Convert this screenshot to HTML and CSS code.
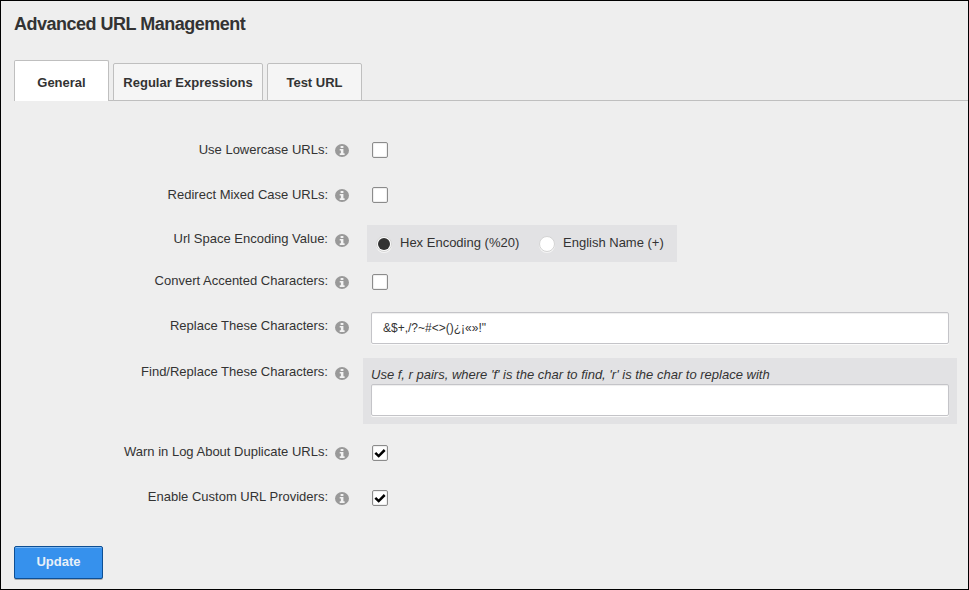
FILE: index.html
```html
<!DOCTYPE html>
<html lang="en">
<head>
<meta charset="utf-8">
<title>Advanced URL Management</title>
<link rel="stylesheet" href="styles.css">
</head>
<body>
<svg class="defs" width="0" height="0" aria-hidden="true">
  <symbol id="info" viewBox="0 0 14 13" preserveAspectRatio="none">
    <ellipse cx="7" cy="6.5" rx="7" ry="6.5" fill="#999"/>
    <path d="M5.6 1.9h2.8v2H5.6zM4.7 4.9h3.7v4.4h1.2v1.7H4.7V9.3h1.2V6.5H4.7z" fill="#f2f2f2"/>
  </symbol>
  <symbol id="check" viewBox="0 0 12 12">
    <path d="M1.3 5.8L4.7 9.1L10.7 3" fill="none" stroke="#000" stroke-width="2.5"/>
  </symbol>
</svg>
<main class="page">
  <h1 class="title">Advanced URL Management</h1>
  <nav class="tabs">
    <a class="tab active">General</a>
    <a class="tab regex">Regular Expressions</a>
    <a class="tab">Test URL</a>
  </nav>
  <form class="form">
    <div class="row">
      <label class="label">Use Lowercase URLs:</label><svg class="info"><use href="#info"/></svg>
      <span class="box"></span>
    </div>
    <div class="row">
      <label class="label">Redirect Mixed Case URLs:</label><svg class="info"><use href="#info"/></svg>
      <span class="box"></span>
    </div>
    <div class="row short">
      <label class="label raised">Url Space Encoding Value:</label><svg class="info"><use href="#info"/></svg>
      <div class="radios">
        <span class="radio on"></span><span class="option">Hex Encoding (%20)</span>
        <span class="radio"></span><span class="option">English Name (+)</span>
      </div>
    </div>
    <div class="row">
      <label class="label raised">Convert Accented Characters:</label><svg class="info"><use href="#info"/></svg>
      <span class="box"></span>
    </div>
    <div class="row medium">
      <label class="label raised">Replace These Characters:</label><svg class="info"><use href="#info"/></svg>
      <div class="field">&amp;$+,/?~#&lt;&gt;()¿¡«»!"</div>
    </div>
    <div class="row tall">
      <label class="label raised">Find/Replace These Characters:</label><svg class="info"><use href="#info"/></svg>
      <div class="panel">
        <em class="hint">Use f, r pairs, where 'f' is the char to find, 'r' is the char to replace with</em>
        <div class="field"></div>
      </div>
    </div>
    <div class="row">
      <label class="label raised">Warn in Log About Duplicate URLs:</label><svg class="info"><use href="#info"/></svg>
      <span class="box"><svg class="check"><use href="#check"/></svg></span>
    </div>
    <div class="row">
      <label class="label raised">Enable Custom URL Providers:</label><svg class="info"><use href="#info"/></svg>
      <span class="box"><svg class="check"><use href="#check"/></svg></span>
    </div>
    <button class="update" type="button">Update</button>
  </form>
</main>
</body>
</html>
```

FILE: styles.css
```css
* { box-sizing: border-box; }
body {
  margin: 0;
  font: 13px/16px "Liberation Sans", Arial, sans-serif;
  color: #333;
}
.defs { display: block; }
.page {
  width: 969px;
  height: 590px;
  border: 1px solid #000;
  background: #eee;
  overflow: hidden;
}
.title {
  margin: 12px 0 0 13px;
  font-size: 18px;
  line-height: 22px;
  letter-spacing: -0.5px;
}
.tabs {
  display: flex;
  align-items: flex-end;
  gap: 4px;
  height: 66px;
  margin-left: 13px;
  box-shadow: inset 0 -1px #bfbfbf;
}
.tab {
  width: 95px;
  height: 38px;
  border: 1px solid #bfbfbf;
  border-radius: 2px 2px 0 0;
  background: #f5f5f5;
  font-weight: bold;
  line-height: 37px;
  text-align: center;
  white-space: nowrap;
}
.tab.active {
  height: 41px;
  border-bottom: 0;
  background: #fff;
  line-height: 43px;
}
.tab.regex { width: 150px; }
.form { padding-top: 27px; }
.row {
  display: flex;
  align-items: flex-start;
  height: 45px;
}
.row.short { height: 42px; }
.row.medium { height: 46px; }
.row.tall { height: 80px; }
.label {
  width: 327px;
  margin-top: 14px;
  text-align: right;
  white-space: nowrap;
}
.label.raised { margin-top: 13px; }
.info {
  flex: none;
  width: 14px;
  height: 13px;
  margin: 16px 0 0 7px;
}
.box {
  flex: none;
  display: grid;
  place-items: center;
  width: 16px;
  height: 16px;
  margin: 14px 0 0 23px;
  border: 1px solid #8b8b8b;
  border-radius: 2px;
  background: #fff;
  box-shadow: inset 0 0 1px 1px #eee;
}
.check { width: 12px; height: 12px; }
.radios {
  display: flex;
  align-items: center;
  width: 310px;
  height: 37px;
  margin: 7px 0 0 18px;
  padding-left: 9px;
  background: #e2e2e4;
}
.radio {
  flex: none;
  display: grid;
  place-items: center;
  width: 16px;
  height: 16px;
  margin-right: 8px;
  border: 1px solid #d4d4d4;
  border-radius: 50%;
  background: #fff;
  box-shadow: 0 1px #f5f5f5;
}
.radio.on::before {
  content: "";
  width: 12px;
  height: 12px;
  border-radius: 50%;
  background: #333;
}
.option { width: 139px; flex: none; white-space: nowrap; padding-bottom: 2px; }
.field {
  width: 578px;
  height: 32px;
  margin: 7px 0 0 22px;
  padding-left: 11px;
  border: 1px solid #c4c4c8;
  border-radius: 2px;
  background: #fff;
  box-shadow: inset 0 1px 1px #eee, 0 1px #fafafa;
  font-size: 12px;
  line-height: 30px;
}
.panel {
  width: 594px;
  height: 66px;
  margin: 7px 0 0 14px;
  padding: 9px 8px 0;
  background: #e2e2e4;
}
.hint { display: block; height: 17px; white-space: nowrap; }
.panel .field { margin: 0; }
.update {
  display: block;
  width: 89px;
  height: 33px;
  margin: 25px 0 0 13px;
  padding: 0 0 2px;
  border: 1px solid #0e4f94;
  border-radius: 2px;
  background: #3691ed;
  box-shadow: inset 0 1px #79b7f4, 0 1px #aaa;
  color: #e8f0f8;
  font: bold 13px/16px "Liberation Sans", Arial, sans-serif;
}
```
